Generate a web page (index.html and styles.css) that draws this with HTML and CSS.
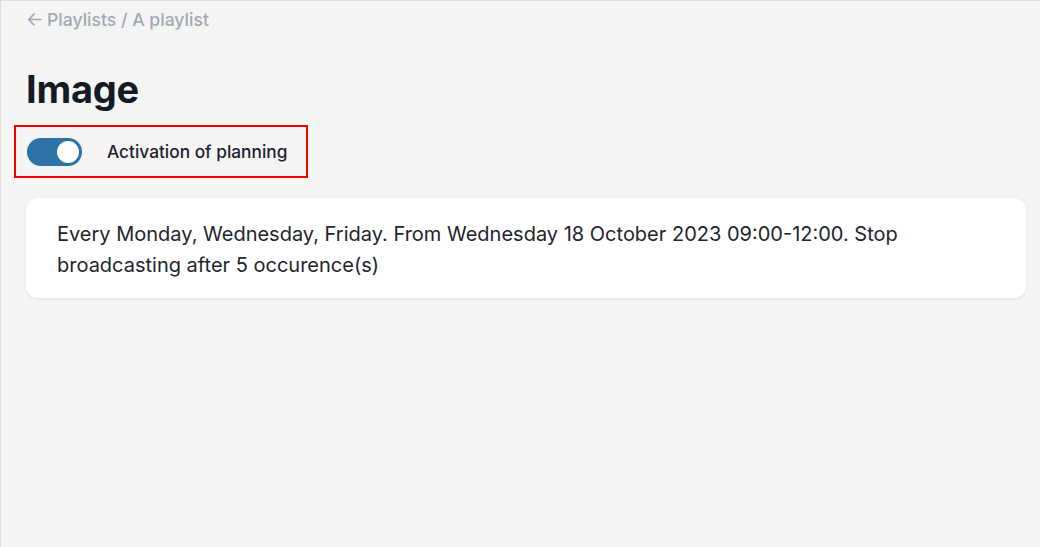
FILE: index.html
```html
<!DOCTYPE html>
<html>
<head>
<meta charset="utf-8">
<link rel="stylesheet" href="styles.css">
</head>
<body>
<div class="page">
  <nav class="crumbs">
    <svg class="back" width="17" height="17" viewBox="0 0 16 16" fill="none" stroke="currentColor" stroke-width="1.6" stroke-linecap="round" stroke-linejoin="round"><path d="M14 8H2.5M7.5 3 2.5 8l5 5"/></svg>
    <span>Playlists / A playlist</span>
  </nav>
  <h1 class="title">Image</h1>
  <div class="toggle-row">
    <span class="switch"><span class="knob"></span></span>
    <span class="toggle-label">Activation of planning</span>
  </div>
  <div class="card">
    <p>Every Monday, Wednesday, Friday. From Wednesday 18 October 2023 09:00-12:00. Stop broadcasting after 5 occurence(s)</p>
  </div>
</div>
</body>
</html>
```
FILE: styles.css
```css
* { box-sizing: border-box; }
html, body { margin: 0; height: 100%; }
body {
  background: #f4f4f3;
  font-family: Inter, "Noto Sans", sans-serif;
  border-top: 1px solid #dcdcdc;
  border-left: 1px solid #dcdcdc;
}
.page {
  padding: 8px 14px 0 25px;
}
.crumbs {
  display: flex;
  align-items: center;
  gap: 4px;
  color: #a3a8b3;
  font-size: 17.6px;
  font-weight: 500;
  height: 20px;
}
.back { display: block; }
.title {
  margin: 38px 0 0;
  font-size: 38px;
  font-weight: 700;
  color: #151a27;
  line-height: 44px;
  letter-spacing: -0.2px;
}
.toggle-row {
  margin: 14px 0 0 -12px;
  width: 294px;
  height: 53px;
  border: 2px solid #f00000;
  display: flex;
  align-items: center;
  padding-left: 11px;
}
.switch {
  width: 55px;
  height: 28px;
  border-radius: 14px;
  background: #2e73a8;
  position: relative;
  flex: none;
}
.knob {
  position: absolute;
  right: 3px;
  top: 3px;
  width: 22px;
  height: 22px;
  border-radius: 50%;
  background: #fff;
}
.toggle-label {
  margin-left: 25px;
  font-size: 17.3px;
  font-weight: 500;
  color: #1d2230;
}
.card {
  margin-top: 20px;
  background: #fff;
  border-radius: 12px;
  box-shadow: 0 1px 3px rgba(0,0,0,0.08);
  padding: 21px 31px 17px;
}
.card p {
  margin: 0;
  font-size: 20px;
  line-height: 31px;
  color: #22252b;
}
```
